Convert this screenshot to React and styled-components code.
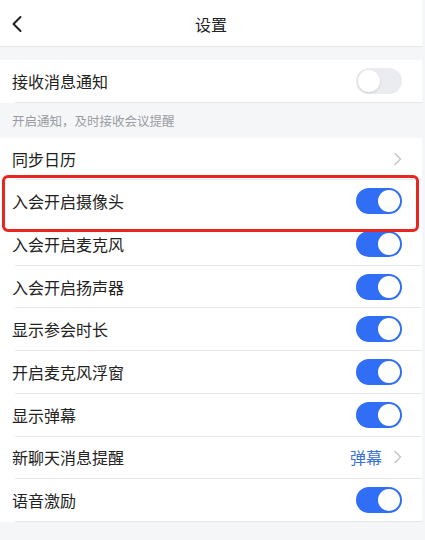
import React from "react";
import styled, { createGlobalStyle } from "styled-components";

const GlobalStyle = createGlobalStyle`
  html, body {
    margin: 0;
    padding: 0;
    background: #f5f6f8;
  }
  body {
    font-family: "Noto Sans CJK SC", "Noto Sans", sans-serif;
    color: #222;
  }
`;

const rows = [
  { label: "同步日历", type: "link" },
  { label: "入会开启摄像头", type: "toggle", on: true, highlight: true },
  { label: "入会开启麦克风", type: "toggle", on: true },
  { label: "入会开启扬声器", type: "toggle", on: true },
  { label: "显示参会时长", type: "toggle", on: true },
  { label: "开启麦克风浮窗", type: "toggle", on: true },
  { label: "显示弹幕", type: "toggle", on: true },
  { label: "新聊天消息提醒", type: "link", value: "弹幕" },
  { label: "语音激励", type: "toggle", on: true },
];

function Chevron() {
  return (
    <ChevronIcon width="8" height="14" viewBox="0 0 8 14">
      <path d="M1 1.5 L6.5 7 L1 12.5" fill="none" stroke="#c5c6c9" strokeWidth="1.6" strokeLinecap="round" strokeLinejoin="round" />
    </ChevronIcon>
  );
}

function Toggle({ on }) {
  return (
    <Switch $on={on}>
      <Knob $on={on} />
    </Switch>
  );
}

class App extends React.Component {
  render() {
    return (
      <Page>
        <GlobalStyle />
        <Header>
          <Back>
            <svg width="12" height="18" viewBox="0 0 12 18">
              <path d="M9.5 2 L2.5 9 L9.5 16" fill="none" stroke="#1f1f1f" strokeWidth="2" strokeLinecap="round" strokeLinejoin="round" />
            </svg>
          </Back>
          <Title>设置</Title>
        </Header>

        <Group>
          <Row>
            <Label>接收消息通知</Label>
            <Toggle on={false} />
          </Row>
        </Group>
        <Caption>开启通知，及时接收会议提醒</Caption>

        <Group>
          {rows.map((r) => (
            <Row key={r.label} $highlight={r.highlight}>
              <Label>{r.label}</Label>
              <Right>
                {r.value && <Value>{r.value}</Value>}
                {r.type === "link" ? <Chevron /> : <Toggle on={r.on} />}
              </Right>
            </Row>
          ))}
        </Group>
      </Page>
    );
  }
}

export default App;

let Page = styled.div`
  width: 422px;
  min-height: 540px;
  background: #f5f6f8;
`;

let Header = styled.div`
  height: 46px;
  background: #fff;
  border-bottom: 1px solid #e6e7ea;
  display: flex;
  align-items: center;
  justify-content: center;
  position: relative;
  margin-bottom: 13px;
`;

let Back = styled.div`
  position: absolute;
  left: 11px;
  top: 15px;
  display: flex;
`;

let Title = styled.div`
  font-size: 16px;
  color: #222;
  margin-top: 1px;
`;

let Group = styled.div`
  background: #fff;
`;

let Row = styled.div`
  height: 42.7px;
  box-sizing: border-box;
  padding: 0 20px 1px 12px;
  display: flex;
  align-items: center;
  justify-content: space-between;
  position: relative;

  &::after {
    content: "";
    position: absolute;
    left: 15px;
    right: 0;
    bottom: 0;
    height: 1px;
    background: #e6e7ea;
    display: ${(p) => (p.$highlight ? "none" : "block")};
  }

  ${(p) =>
    p.$highlight &&
    `
    &::before {
      content: "";
      position: absolute;
      top: -5px;
      bottom: -9px;
      left: 2px;
      right: 3px;
      border: 3px solid #e8261f;
      border-radius: 6px;
      pointer-events: none;
      z-index: 2;
    }
  `}
`;

let Label = styled.div`
  font-size: 16px;
  color: #222;
`;

let Right = styled.div`
  display: flex;
  align-items: center;
  gap: 12px;
`;

let Value = styled.div`
  font-size: 16px;
  color: #3a6fd6;
`;

let ChevronIcon = styled.svg`
  display: block;
`;

let Switch = styled.div`
  width: 46px;
  height: 26px;
  border-radius: 13px;
  background: ${(p) => (p.$on ? "#2f6ef5" : "#ebecef")};
  display: flex;
  align-items: center;
  justify-content: ${(p) => (p.$on ? "flex-end" : "flex-start")};
  padding: 0 2px;
  box-sizing: border-box;
`;

let Knob = styled.div`
  width: 22px;
  height: 22px;
  border-radius: 50%;
  background: #fff;
  box-shadow: ${(p) => (p.$on ? "none" : "0 1px 3px rgba(0,0,0,0.12)")};
`;

let Caption = styled.div`
  height: 35px;
  display: flex;
  align-items: center;
  padding-left: 12px;
  font-size: 12.5px;
  color: #9a9ca1;
`;
